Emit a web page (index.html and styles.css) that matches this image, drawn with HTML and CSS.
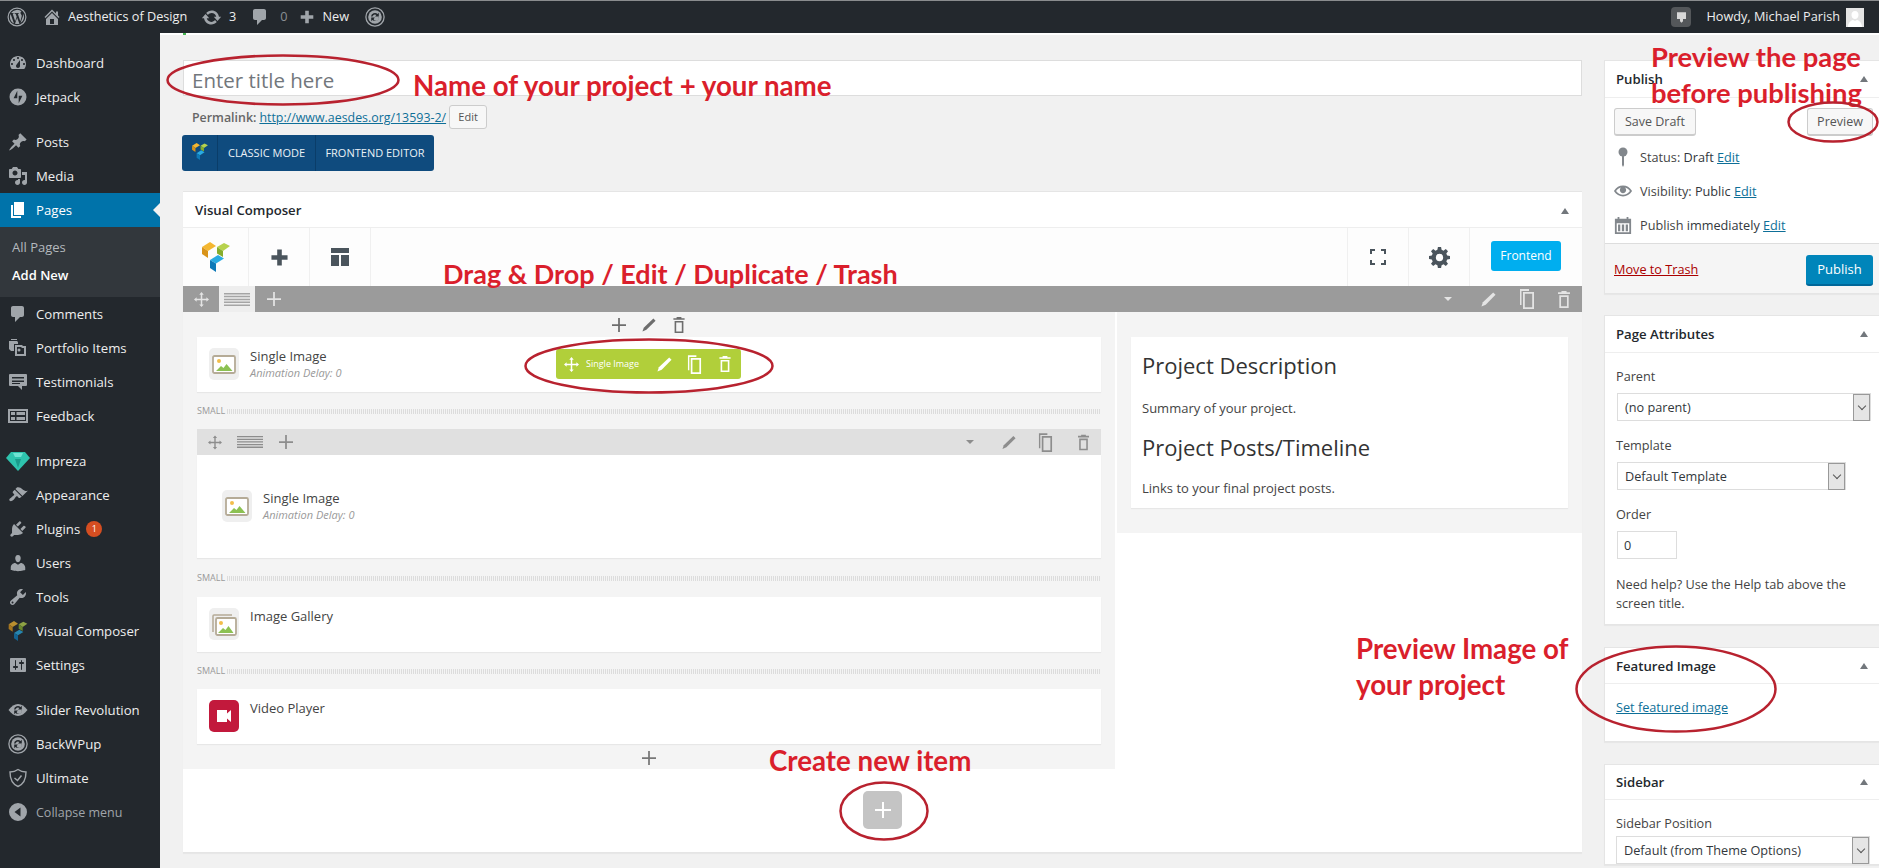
FILE: index.html
```html
<!DOCTYPE html>
<html lang="en">
<head>
<meta charset="utf-8">
<title>Add New Page</title>
<link rel="stylesheet" href="styles.css">
</head>
<body>
<svg class="defs" aria-hidden="true">
  <symbol id="i-wp" viewBox="0 0 20 20"><circle cx="10" cy="10" r="8.9" fill="none" stroke="currentColor" stroke-width="1.2"/><path fill="currentColor" d="M2.9 10c0 2.9 1.7 5.3 4.1 6.5L3.6 7.1C3.2 8 2.9 9 2.9 10zm11.9-.4c0-.9-.3-1.5-.6-2-.4-.6-.7-1.1-.7-1.7 0-.7.5-1.3 1.2-1.3h.1A7.1 7.1 0 0 0 4.100 6.100h.5c.7 0 1.900-.1 1.900-.1.400 0 .4.500 0 .6 0 0-.4 0-.8.100l2.500 7.500 1.500-4.500-1.100-2.900c-.4 0-.7-.1-.7-.1-.4 0-.3-.6 0-.6 0 0 1.100.1 1.800.1s1.900-.1 1.900-.1c.4 0 .4.500 0 .6 0 0-.4 0-.8.100l2.500 7.400.7-2.300c.3-1 .5-1.700.5-2.300zM10.100 10.700l-2.100 6.100a7.100 7.100 0 0 0 4.400-.1l-.05-.1zm6.100-4c0 .2 0 .5 0 .7 0 .7-.1 1.500-.5 2.500l-2.200 6.200a7.100 7.100 0 0 0 2.700-9.400z"/></symbol>
  <symbol id="i-home" viewBox="0 0 20 20"><path fill="currentColor" d="M16 8.500l1.530 1.530-1.060 1.060L10 4.620l-6.470 6.470-1.060-1.060L10 2.500l4 4v-2h2v4zm-6-2.460l6 5.990V18H4v-5.970zM12 17v-5H8v5h4z"/></symbol>
  <symbol id="i-update" viewBox="0 0 20 20"><path fill="currentColor" d="M10.200 3.280c3.530 0 6.430 2.610 6.920 6h2.080l-3.500 4-3.500-4h2.320c-.45-1.970-2.210-3.450-4.320-3.450-1.450 0-2.730.71-3.540 1.780L4.950 5.660C6.230 4.200 8.110 3.280 10.200 3.280zm-.4 13.440c-3.520 0-6.430-2.610-6.920-6H.8l3.500-4c1.170 1.330 2.330 2.670 3.500 4H5.480c.45 1.970 2.210 3.450 4.320 3.450 1.450 0 2.730-.71 3.540-1.780l1.710 1.950c-1.280 1.460-3.150 2.380-5.250 2.380z"/></symbol>
  <symbol id="i-comment" viewBox="0 0 20 20"><path fill="currentColor" d="M5 2h9c1.100 0 2 .9 2 2v7c0 1.100-.9 2-2 2h-2l-5 5v-5H5c-1.100 0-2-.9-2-2V4c0-1.100.9-2 2-2z"/></symbol>
  <symbol id="i-plus-bold" viewBox="0 0 20 20"><path fill="currentColor" d="M17 8v4h-5v5H8v-5H3V8h5V3h4v5z"/></symbol>
  <symbol id="i-backwpup" viewBox="0 0 20 20"><circle cx="10" cy="10" r="9.100" fill="none" stroke="currentColor" stroke-width="1.300"/><circle cx="10" cy="10" r="6.800" fill="currentColor"/><path fill="#23282d" d="M6 9.500a4 4 0 0 1 6.600-2.600l1.200-1.200v3.700h-3.700l1.300-1.300A2.500 2.500 0 0 0 7.500 9.500zm8 1a4 4 0 0 1-6.600 2.600l-1.200 1.200v-3.700h3.700l-1.300 1.300a2.500 2.500 0 0 0 4.900-1.400z"/></symbol>
  <symbol id="i-dashboard" viewBox="0 0 20 20"><path fill="currentColor" d="M3.760 16h12.480c1.100-1.370 1.760-3.110 1.760-5 0-4.420-3.580-8-8-8s-8 3.580-8 8c0 1.890.66 3.630 1.760 5zM10 4c.55 0 1 .45 1 1s-.45 1-1 1-1-.45-1-1 .45-1 1-1zM6 6c.55 0 1 .45 1 1s-.45 1-1 1-1-.45-1-1 .45-1 1-1zm8 0c.55 0 1 .45 1 1s-.45 1-1 1-1-.45-1-1 .45-1 1-1zm-5.370 5.550L12 7v6c0 1.100-.9 2-2 2s-2-.9-2-2c0-.57.24-1.080.63-1.450zM4 10c.55 0 1 .45 1 1s-.45 1-1 1-1-.45-1-1 .45-1 1-1zm12 0c.55 0 1 .45 1 1s-.45 1-1 1-1-.45-1-1 .45-1 1-1z"/></symbol>
  <symbol id="i-jetpack" viewBox="0 0 20 20"><path fill="currentColor" fill-rule="evenodd" d="M10 1.500a8.500 8.500 0 1 0 0 17 8.500 8.500 0 0 0 0-17zM9.300 3.800v7.500H5.600zm1.400 12.400V8.700h3.700z"/></symbol>
  <symbol id="i-post" viewBox="0 0 20 20"><path fill="currentColor" d="M10.440 3.020l1.820-1.820 6.360 6.350-1.830 1.820c-1.050-.68-2.480-.57-3.410.36l-.75.75c-.92.93-1.040 2.350-.35 3.410l-1.830 1.820-2.410-2.410-2.800 2.790c-.42.42-3.380 2.710-3.800 2.290s1.860-3.390 2.280-3.810l2.790-2.790L4.100 9.360l1.830-1.820c1.050.69 2.480.57 3.400-.36l.75-.75c.93-.92 1.050-2.350.36-3.410z"/></symbol>
  <symbol id="i-media" viewBox="0 0 20 20"><path fill="currentColor" d="M13 11V4c0-.55-.45-1-1-1h-1.670L9 1H5L3.670 3H2c-.55 0-1 .45-1 1v7c0 .55.45 1 1 1h10c.55 0 1-.45 1-1zM7 4.500c1.380 0 2.500 1.120 2.500 2.500S8.380 9.500 7 9.500 4.500 8.380 4.500 7 5.620 4.500 7 4.500zM14 6h5v10.500c0 1.380-1.120 2.500-2.500 2.500S14 17.880 14 16.500s1.120-2.500 2.500-2.500c.17 0 .34.020.5.050V9h-3V6zm-4 8.050V13h2v3.500c0 1.380-1.120 2.500-2.500 2.500S7 17.880 7 16.500 8.120 14 9.500 14c.17 0 .34.020.5.050z"/></symbol>
  <symbol id="i-pages" viewBox="0 0 20 20"><path fill="currentColor" d="M6 15V2h10v13H6zm-1 1h8v2H3V5h2v11z"/></symbol>
  <symbol id="i-portfolio" viewBox="0 0 20 20"><path fill="currentColor" d="M1 3h8l1 1v2H6v7H3L1 11zm6 4h7l1 1h3v10H7zm2 2v7h7v-6h-2l-1-1zm2 1.500a1.500 1.500 0 1 1 0 3 1.500 1.500 0 0 1 0-3zM3 1h6v1H3z"/></symbol>
  <symbol id="i-testimonial" viewBox="0 0 20 20"><path fill="currentColor" fill-rule="evenodd" d="M2 2h16a1 1 0 0 1 1 1v10a1 1 0 0 1-1 1h-4v4l-4-4H2a1 1 0 0 1-1-1V3a1 1 0 0 1 1-1zm2 3v1.500h12V5zm0 3.500V10h12V8.500zM4 11v1h8v-1z"/></symbol>
  <symbol id="i-feedback" viewBox="0 0 20 20"><path fill="currentColor" fill-rule="evenodd" d="M0 3h20v14H0zm2 2v10h16V5zm1 1h4v3H3zm5.500 0H17v3H8.500zM3 11h4v3H3zm5.500 0H17v3H8.500z"/></symbol>
  <symbol id="i-diamond" viewBox="0 0 24 20"><path fill="#2ec4ae" d="M5 1h14l5 6-12 13L0 7z"/><path fill="#6fe3d3" d="M7 2h10l-2 4H9z"/><path fill="#1a9c8c" d="M9 8h6l-3 9z"/></symbol>
  <symbol id="i-brush" viewBox="0 0 20 20"><path fill="currentColor" d="M14.480 11.060L7.410 3.990l1.500-1.500c.5-.56 2.300-.47 3.510.32 1.210.8 1.430 1.280 2.910 2.100 1.180.64 2.450 1.260 4.450.85zm-.71.71L6.700 4.700 4.930 6.470c-.39.39-.39 1.020 0 1.410l1.060 1.060c.39.39.39 1.030 0 1.420-.6.6-1.430 1.110-2.210 1.690-.35.26-.7.53-1.010.84C1.430 13.230.76 14.800 1.700 15.820c.94.95 2.590.34 3.920-1 .31-.31.58-.66.85-1.010.58-.78 1.090-1.610 1.690-2.210.39-.39 1.020-.39 1.410 0l1.060 1.060c.39.39 1.020.39 1.410 0z"/></symbol>
  <symbol id="i-plugin" viewBox="0 0 20 20"><path fill="currentColor" d="M13.110 4.360L9.870 7.600 8 5.730l3.240-3.240c.35-.34 1.050-.2 1.560.32.52.51.66 1.210.31 1.550zm-8 1.770l.91-1.120 9.010 9.010-1.190.84c-.71.71-2.630 1.160-3.820 1.160H6.140L4.900 17.260c-.59.59-1.540.59-2.120 0-.59-.58-.59-1.530 0-2.120l1.240-1.240v-3.880c0-1.130.4-3.190 1.090-3.890zm7.260 3.970l3.240-3.240c.34-.35 1.040-.21 1.550.31.52.51.66 1.210.31 1.550l-3.240 3.250z"/></symbol>
  <symbol id="i-users" viewBox="0 0 20 20"><path fill="currentColor" d="M10 9.250c-2.270 0-2.730-3.440-2.730-3.440C7 4.020 7.820 2 9.970 2c2.160 0 2.980 2.020 2.710 3.810 0 0-.41 3.440-2.680 3.440zm0 2.570L12.720 10c2.390 0 4.520 2.330 4.520 4.530v2.490s-3.650 1.130-7.240 1.130c-3.650 0-7.240-1.130-7.240-1.130v-2.490c0-2.250 1.940-4.480 4.470-4.480z"/></symbol>
  <symbol id="i-tools" viewBox="0 0 20 20"><path fill="currentColor" d="M16.680 9.770c-1.340 1.340-3.300 1.670-4.950.99l-5.410 6.520c-.99.99-2.590.99-3.580 0s-.99-2.590 0-3.570l6.520-5.420c-.68-1.650-.35-3.610.99-4.950 1.280-1.280 3.120-1.620 4.720-1.060l-2.890 2.890 2.820 2.820 2.860-2.870c.53 1.580.18 3.390-1.080 4.650zM3.810 16.210c.4.39 1.040.39 1.430 0 .4-.4.4-1.040 0-1.430-.39-.4-1.030-.4-1.430 0-.39.39-.39 1.030 0 1.430z"/></symbol>
  <symbol id="i-vc" viewBox="0 0 28 30"><path fill="#f4b731" d="M0 5l8-5 6 4-8 5z"/><path fill="#d9941a" d="M0 5l6 4v7l-6-4z"/><path fill="#b7d24d" d="M15 5l7-4 6 3-7 5z"/><path fill="#86ad2c" d="M15 5l6 4v6l-6-3.500z"/><path fill="#29abe2" d="M8 18l8-5 6 3.500-8 5z"/><path fill="#0e7ab8" d="M8 18l6 3.500V30l-6-4z"/></symbol>
  <symbol id="i-settings" viewBox="0 0 20 20"><path fill="currentColor" d="M18 16V4c0-.55-.45-1-1-1H3c-.55 0-1 .45-1 1v12c0 .55.45 1 1 1h14c.55 0 1-.45 1-1zM8 11h1c.55 0 1 .45 1 1s-.45 1-1 1H8v1.500c0 .28-.22.5-.5.5s-.5-.22-.5-.5V13H6c-.55 0-1-.45-1-1s.45-1 1-1h1V5.500c0-.28.22-.5.5-.5s.5.22.5.5V11zm5-2h-1c-.55 0-1-.45-1-1s.45-1 1-1h1V5.500c0-.28.22-.5.5-.5s.5.22.5.5V7h1c.55 0 1 .45 1 1s-.45 1-1 1h-1v5.500c0 .28-.22.5-.5.5s-.5-.22-.5-.5V9z"/></symbol>
  <symbol id="i-slider" viewBox="0 0 20 20"><path fill="currentColor" d="M10 4c3.400 0 6.500 2.300 9.500 6-3 3.700-6.100 6-9.500 6S3.500 13.700.5 10C3.500 6.300 6.600 4 10 4z"/><path fill="#23282d" d="M6 9.500a4 4 0 0 1 6.600-2.600l1.200-1.200v3.700h-3.700l1.300-1.300A2.500 2.500 0 0 0 7.500 9.500zm8 1a4 4 0 0 1-6.600 2.600l-1.200 1.200v-3.700h3.700l-1.300 1.300a2.500 2.500 0 0 0 4.900-1.400z"/></symbol>
  <symbol id="i-shield" viewBox="0 0 20 20"><path fill="none" stroke="currentColor" stroke-width="1.400" d="M2 4c3 0 6-1 8-2.500C12 3 15 4 18 4c0 7-2 12-8 14.500C4 16 2 11 2 4z"/><path fill="none" stroke="currentColor" stroke-width="1.500" d="M6.500 10l3 2.500 4-5"/></symbol>
  <symbol id="i-collapse" viewBox="0 0 20 20"><path fill="currentColor" fill-rule="evenodd" d="M10 1a9 9 0 1 1 0 18 9 9 0 0 1 0-18zm2.500 4.500L6.500 10l6 4.500z"/></symbol>
  <symbol id="i-monitor" viewBox="0 0 20 20"><path fill="currentColor" d="M4 3h12v9h-4v3l-2 2-2-2v-3H4z"/></symbol>
  <symbol id="i-avatar" viewBox="0 0 18 19"><rect width="18" height="19" fill="#e4e4e4"/><path fill="#fff" d="M9 3c2.300 0 3.700 1.800 3.500 4.200C12.300 9.500 11 11 9 11S5.700 9.500 5.500 7.200C5.300 4.800 6.700 3 9 3zM2 19c0-4 2.500-6.500 5-7l2 1 2-1c2.500.5 5 3 5 7z"/></symbol>
  <symbol id="i-layout" viewBox="0 0 20 20"><path fill="currentColor" d="M1 1h18v5H1zm0 7h8v11H1zm10 0h8v11h-8z"/></symbol>
  <symbol id="i-full" viewBox="0 0 16 16"><path fill="currentColor" d="M0 0h5v2H2v3H0zm11 0h5v5h-2V2h-3zM0 11h2v3h3v2H0zm14 0h2v5h-5v-2h3z"/></symbol>
  <symbol id="i-gear" viewBox="0 0 20 20"><path fill="currentColor" fill-rule="evenodd" d="M8.500 0h3l.5 2.700 1.800.8L16 1.900 18.100 4l-1.600 2.200.8 1.800 2.700.5v3l-2.700.5-.8 1.800 1.600 2.200L16 18.100l-2.200-1.600-1.800.8-.5 2.700h-3L8 17.300l-1.800-.8L4 18.100 1.900 16l1.600-2.200-.8-1.800L0 11.500v-3L2.700 8l.8-1.800L1.900 4 4 1.900l2.200 1.600L8 2.700zM10 6.500a3.500 3.500 0 1 0 0 7 3.500 3.500 0 0 0 0-7z"/></symbol>
  <symbol id="i-move" viewBox="0 0 20 20"><path fill="currentColor" d="M10 0l3 3.500h-2V9h5.500V7l3.500 3-3.500 3v-2H11v5.500h2L10 20l-3-3.500h2V11H3.500v2L0 10l3.500-3v2H9V3.500H7z"/></symbol>
  <symbol id="i-lines" viewBox="0 0 26 16" preserveAspectRatio="none"><path fill="currentColor" d="M0 0h26v1.800H0zm0 3.500h26v1.800H0zM0 7h26v1.800H0zm0 3.500h26v1.800H0zM0 14h26v2H0z"/></symbol>
  <symbol id="i-plus" viewBox="0 0 16 16"><path fill="currentColor" d="M7 0h2v7h7v2H9v7H7V9H0V7h7z"/></symbol>
  <symbol id="i-pencil" viewBox="0 0 16 16"><path fill="currentColor" d="M13 .5 15.500 3 5 13.500.5 15.500 2 11z"/></symbol>
  <symbol id="i-copy" viewBox="0 0 16 20"><path fill="currentColor" d="M1 0h9v2H2.500v14H1zM4 3h11v17H4zm1.800 1.800v13.400h7.400V4.800z"/></symbol>
  <symbol id="i-trash" viewBox="0 0 14 20"><path fill="currentColor" d="M4 0h6v1.500h4v2H0v-2h4zM1.500 5h11v15h-11zm2 2v11h7V7z"/></symbol>
  <symbol id="i-image" viewBox="0 0 30 32"><rect x="0" y="0" width="30" height="32" rx="5" fill="#efefef"/><rect x="4" y="8" width="22" height="17" rx="1.500" fill="#fff" stroke="#b5ab97" stroke-width="1.800"/><circle cx="10" cy="13" r="2" fill="#f2bd4b"/><path fill="#8cc152" d="M7 23l5-5 2.500 2 3-4 6 7z"/></symbol>
  <symbol id="i-gallery" viewBox="0 0 30 32"><rect x="0" y="0" width="30" height="32" rx="5" fill="#efefef"/><path fill="none" stroke="#b5ab97" stroke-width="1.500" d="M4 24V8a1 1 0 0 1 1-1h18"/><rect x="7" y="10" width="20" height="17" rx="1.500" fill="#fff" stroke="#b5ab97" stroke-width="1.800"/><circle cx="12" cy="15" r="2" fill="#f2bd4b"/><path fill="#8cc152" d="M9 25l5-5 2.500 2 3-4 5 7z"/></symbol>
  <symbol id="i-video" viewBox="0 0 30 32"><rect width="30" height="32" rx="5" fill="#c2193c"/><path fill="#fff" d="M8 10h10v3.500l4-3.500v12l-4-3.500V22H8z"/></symbol>
  <symbol id="i-pin" viewBox="0 0 12 20"><circle cx="6" cy="5" r="4.500" fill="currentColor"/><path fill="currentColor" d="M5 8h2v10l-1 2-1-2z"/></symbol>
  <symbol id="i-eye" viewBox="0 0 20 20"><path fill="currentColor" d="M19.700 9.400C17.700 6 14 3.900 10 3.900S2.300 6 .3 9.400L0 10l.3.6c2 3.400 5.700 5.500 9.700 5.500s7.700-2.100 9.700-5.500l.3-.6-.3-.6zM10 14.100c-3.100 0-6-1.600-7.700-4.100C3.600 8 5.700 6.600 8 6.100c-.9.6-1.500 1.700-1.500 2.900 0 1.900 1.600 3.500 3.500 3.500s3.500-1.600 3.500-3.500c0-1.200-.6-2.300-1.500-2.900 2.300.5 4.400 1.900 5.700 3.900-1.700 2.500-4.600 4.100-7.700 4.100z"/></symbol>
  <symbol id="i-calendar" viewBox="0 0 20 20"><path fill="currentColor" fill-rule="evenodd" d="M1 3h3V1h2v2h8V1h2v2h3v17H1zm2 5v10h14V8zm1.500 1.500h2.500V17H4.500zm4.200 0h2.600V17H8.700zm4.300 0h2.500V17H13z"/></symbol>
</svg>

<header class="topbar">
  <svg class="tb-wp"><use href="#i-wp"/></svg>
  <svg class="tb-home"><use href="#i-home"/></svg>
  <span class="tb-site">Aesthetics of Design</span>
  <svg class="tb-update"><use href="#i-update"/></svg>
  <span class="tb-count">3</span>
  <svg class="tb-comment"><use href="#i-comment"/></svg>
  <span class="tb-zero">0</span>
  <svg class="tb-plus"><use href="#i-plus-bold"/></svg>
  <span class="tb-new">New</span>
  <svg class="tb-backwpup"><use href="#i-backwpup"/></svg>
  <span class="tb-monitor"><svg><use href="#i-monitor"/></svg></span>
  <span class="tb-howdy">Howdy, Michael Parish</span>
  <svg class="tb-avatar"><use href="#i-avatar"/></svg>
</header>

<div class="layout">
  <nav class="sidebar">
    <a class="menu-item"><svg class="mi"><use href="#i-dashboard"/></svg>Dashboard</a>
    <a class="menu-item"><svg class="mi"><use href="#i-jetpack"/></svg>Jetpack</a>
    <div class="menu-sep"></div>
    <a class="menu-item"><svg class="mi"><use href="#i-post"/></svg>Posts</a>
    <a class="menu-item"><svg class="mi"><use href="#i-media"/></svg>Media</a>
    <a class="menu-item active"><svg class="mi"><use href="#i-pages"/></svg>Pages</a>
    <div class="submenu">
      <a class="sub-item">All Pages</a>
      <a class="sub-item current">Add New</a>
    </div>
    <a class="menu-item"><svg class="mi"><use href="#i-comment"/></svg>Comments</a>
    <a class="menu-item"><svg class="mi"><use href="#i-portfolio"/></svg>Portfolio Items</a>
    <a class="menu-item"><svg class="mi"><use href="#i-testimonial"/></svg>Testimonials</a>
    <a class="menu-item"><svg class="mi"><use href="#i-feedback"/></svg>Feedback</a>
    <div class="menu-sep"></div>
    <a class="menu-item"><svg class="mi mi-wide"><use href="#i-diamond"/></svg>Impreza</a>
    <a class="menu-item"><svg class="mi"><use href="#i-brush"/></svg>Appearance</a>
    <a class="menu-item"><svg class="mi"><use href="#i-plugin"/></svg>Plugins<span class="badge">1</span></a>
    <a class="menu-item"><svg class="mi"><use href="#i-users"/></svg>Users</a>
    <a class="menu-item"><svg class="mi"><use href="#i-tools"/></svg>Tools</a>
    <a class="menu-item"><svg class="mi mi-dim"><use href="#i-vc"/></svg>Visual Composer</a>
    <a class="menu-item"><svg class="mi"><use href="#i-settings"/></svg>Settings</a>
    <div class="menu-sep"></div>
    <a class="menu-item"><svg class="mi"><use href="#i-slider"/></svg>Slider Revolution</a>
    <a class="menu-item"><svg class="mi"><use href="#i-backwpup"/></svg>BackWPup</a>
    <a class="menu-item"><svg class="mi"><use href="#i-shield"/></svg>Ultimate</a>
    <a class="menu-item collapse"><svg class="mi"><use href="#i-collapse"/></svg>Collapse menu</a>
  </nav>

  <main class="content">
    <div class="primary">
      <div class="title-box">Enter title here</div>
      <div class="permalink"><span>Permalink:</span><a class="link">http://www.aesdes.org/13593-2/</a><span class="btn-edit">Edit</span></div>
      <div class="vc-switch">
        <span class="vc-cell vc-logo"><svg><use href="#i-vc"/></svg></span>
        <span class="vc-cell vc-mode">CLASSIC MODE</span>
        <span class="vc-cell">FRONTEND EDITOR</span>
      </div>

      <section class="vc-box">
        <div class="vc-head head-low"><span>Visual Composer</span><i class="caret"></i></div>
        <div class="vc-tools">
          <span class="tool tool-logo"><svg class="t-logo"><use href="#i-vc"/></svg></span>
          <span class="tool"><svg class="t-plus"><use href="#i-plus-bold"/></svg></span>
          <span class="tool"><svg class="t-layout"><use href="#i-layout"/></svg></span>
          <span class="tool-fill"></span>
          <span class="tool tool-left"><svg class="t-full"><use href="#i-full"/></svg></span>
          <span class="tool tool-left"><svg class="t-gear"><use href="#i-gear"/></svg></span>
          <span class="tool-btn"><span class="btn-frontend">Frontend</span></span>
        </div>
        <div class="row-bar">
          <span class="rb-cell"><svg class="rb-move"><use href="#i-move"/></svg></span>
          <span class="rb-cell rb-on"><svg class="rb-lines"><use href="#i-lines"/></svg></span>
          <span class="rb-cell"><svg class="rb-plus"><use href="#i-plus"/></svg></span>
          <span class="tool-fill"></span>
          <i class="rb-caret"></i>
          <svg class="rb-pencil"><use href="#i-pencil"/></svg>
          <svg class="rb-copy"><use href="#i-copy"/></svg>
          <svg class="rb-trash"><use href="#i-trash"/></svg>
        </div>
        <div class="columns">
          <div class="col-left">
            <div class="col-ctl">
              <svg class="ctl-plus"><use href="#i-plus"/></svg>
              <svg class="ctl-pencil"><use href="#i-pencil"/></svg>
              <svg class="ctl-trash"><use href="#i-trash"/></svg>
            </div>
            <div class="item">
              <svg class="item-ico"><use href="#i-image"/></svg>
              <div><div class="item-name">Single Image</div><div class="item-sub">Animation Delay: 0</div></div>
              <div class="green-tool">
                <svg class="gt-move"><use href="#i-move"/></svg>
                <span class="gt-label">Single Image</span>
                <svg class="gt-pencil"><use href="#i-pencil"/></svg>
                <svg class="gt-copy"><use href="#i-copy"/></svg>
                <svg class="gt-trash"><use href="#i-trash"/></svg>
              </div>
            </div>
            <div class="small-row"><span>SMALL</span><i></i></div>
            <div class="inner-bar">
              <svg class="ib-move"><use href="#i-move"/></svg>
              <svg class="ib-lines"><use href="#i-lines"/></svg>
              <svg class="ib-plus"><use href="#i-plus"/></svg>
              <span class="tool-fill"></span>
              <i class="ib-caret"></i>
              <svg class="ib-pencil"><use href="#i-pencil"/></svg>
              <svg class="ib-copy"><use href="#i-copy"/></svg>
              <svg class="ib-trash"><use href="#i-trash"/></svg>
            </div>
            <div class="inner-body">
              <svg class="item-ico"><use href="#i-image"/></svg>
              <div><div class="item-name">Single Image</div><div class="item-sub">Animation Delay: 0</div></div>
            </div>
            <div class="small-row small-row-b"><span>SMALL</span><i></i></div>
            <div class="item">
              <svg class="item-ico"><use href="#i-gallery"/></svg>
              <div><div class="item-name">Image Gallery</div></div>
            </div>
            <div class="small-row"><span>SMALL</span><i></i></div>
            <div class="item">
              <svg class="item-ico"><use href="#i-video"/></svg>
              <div><div class="item-name">Video Player</div></div>
            </div>
            <div class="col-foot"><svg class="ctl-plus"><use href="#i-plus"/></svg></div>
          </div>
          <div class="col-right">
            <div class="text-block">
              <h2>Project Description</h2>
              <p>Summary of your project.</p>
              <h2 class="h2-b">Project Posts/Timeline</h2>
              <p>Links to your final project posts.</p>
            </div>
          </div>
        </div>
        <div class="add-area"><span class="add-btn"><svg><use href="#i-plus"/></svg></span></div>
      </section>
    </div>

    <aside class="side">
      <section class="panel">
        <div class="panel-head"><span>Publish</span><i class="caret"></i></div>
        <div class="pub-buttons"><span class="btn">Save Draft</span><span class="btn btn-preview">Preview</span></div>
        <div class="pub-row"><svg class="pr-ico pr-pin"><use href="#i-pin"/></svg><span>Status: <b>Draft</b> <a class="link">Edit</a></span></div>
        <div class="pub-row"><svg class="pr-ico"><use href="#i-eye"/></svg><span>Visibility: <b>Public</b> <a class="link">Edit</a></span></div>
        <div class="pub-row"><svg class="pr-ico"><use href="#i-calendar"/></svg><span>Publish <b>immediately</b> <a class="link">Edit</a></span></div>
        <div class="pub-foot"><a class="trash">Move to Trash</a><span class="btn-publish">Publish</span></div>
      </section>

      <section class="panel">
        <div class="panel-head head-low"><span>Page Attributes</span><i class="caret"></i></div>
        <div class="panel-body attrs">
          <div class="label">Parent</div>
          <div class="select sel-parent"><span>(no parent)</span><i class="sel-arrow"></i></div>
          <div class="label">Template</div>
          <div class="select sel-template"><span>Default Template</span><i class="sel-arrow"></i></div>
          <div class="label">Order</div>
          <div class="order">0</div>
          <p class="help">Need help? Use the Help tab above the screen title.</p>
        </div>
      </section>

      <section class="panel">
        <div class="panel-head head-36"><span>Featured Image</span><i class="caret"></i></div>
        <div class="panel-body feat"><a class="link">Set featured image</a></div>
      </section>

      <section class="panel panel-last">
        <div class="panel-head head-35"><span>Sidebar</span><i class="caret"></i></div>
        <div class="panel-body attrs attrs-tight">
          <div class="label">Sidebar Position</div>
          <div class="select sel-sidebar"><span>Default (from Theme Options)</span><i class="sel-arrow"></i></div>
        </div>
      </section>
    </aside>
  </main>
</div>

<i class="tick"></i>
<div class="note note-name">Name of your project + your name</div>
<div class="note note-drag">Drag &amp; Drop / Edit / Duplicate / Trash</div>
<div class="note note-preview">Preview the page<br>before publishing</div>
<div class="note note-image">Preview Image of<br>your project</div>
<div class="note note-create">Create new item</div>
<svg class="ring ring-title" viewBox="0 0 234 52"><ellipse cx="117" cy="26" rx="115.500" ry="24.500"/></svg>
<svg class="ring ring-preview" viewBox="0 0 92 42"><ellipse cx="46" cy="21" rx="44.500" ry="19.500"/></svg>
<svg class="ring ring-green" viewBox="0 0 250 56"><ellipse cx="125" cy="28" rx="123.500" ry="26.500"/></svg>
<svg class="ring ring-feat" viewBox="0 0 202 88"><ellipse cx="101" cy="44" rx="99.500" ry="42.500"/></svg>
<svg class="ring ring-add" viewBox="0 0 90 60"><ellipse cx="45" cy="30" rx="43.500" ry="28.500"/></svg>
</body>
</html>
```

FILE: styles.css
```css
* { box-sizing: border-box; }
html, body { margin: 0; height: 868px; overflow: hidden; }
body { position: relative; width: 1879px; background: #f1f1f1; font: 13px/1.4 "Open Sans", "Noto Sans", sans-serif; color: #444; }
.defs { position: absolute; width: 0; height: 0; }
i { display: block; font-style: normal; }
svg { display: block; flex: none; }
a { text-decoration: none; }
.link { color: #0e6f98; text-decoration: underline; }
b { font-weight: 400; color: #32373c; }

/* top bar */
.topbar { display: flex; align-items: center; height: 33px; background: #23282d; border-top: 1px solid #8a8c8e; color: #eee; font-size: 12.700px; }
.topbar svg { color: #a0a5aa; }
.tb-wp { width: 20px; height: 20px; margin-left: 7px; }
.tb-home { width: 20px; height: 20px; margin-left: 15px; }
.tb-site { margin-left: 6px; width: 118px; white-space: nowrap; }
.tb-update { width: 21px; height: 21px; margin-left: 15px; }
.tb-count { margin-left: 7px; }
.tb-comment { width: 20px; height: 20px; margin-left: 14px; }
.tb-zero { margin-left: 10px; color: #8a8f94; }
.tb-plus { width: 18px; height: 18px; margin-left: 10px; }
.tb-new { margin-left: 7px; }
.tb-backwpup { width: 20px; height: 20px; margin-left: 16px; }
.tb-monitor { display: flex; align-items: center; justify-content: center; width: 20px; height: 20px; margin-left: auto; background: #54575a; border-radius: 4px; }
.tb-monitor svg { width: 15px; height: 15px; color: #d8d8d8; }
.tb-howdy { margin-left: 15px; }
.tb-avatar { width: 18px; height: 19px; margin: 0 15px 0 6px; }

/* shell */
.layout { display: flex; height: 835px; }
.sidebar { flex: none; width: 160px; padding-top: 13px; background: #23282d; color: #eee; font-size: 13.200px; }
.menu-item { display: flex; align-items: center; position: relative; height: 34px; padding-left: 36px; white-space: nowrap; }
.mi { position: absolute; left: 8px; top: 7px; width: 20px; height: 20px; color: #a0a5aa; }
.mi-wide { left: 6px; width: 24px; }
.mi-dim { opacity: .72; }
.menu-sep { height: 11px; }
.menu-item.active { background: #0073aa; color: #fff; }
.menu-item.active .mi { color: #fff; }
.menu-item.active::after { content: ""; position: absolute; right: 0; top: 10px; border: 7px solid transparent; border-right-color: #f1f1f1; border-left-width: 0; }
.submenu { height: 70px; padding-top: 6px; background: #32373c; font-size: 13px; }
.sub-item { display: flex; align-items: center; height: 28px; padding-left: 12px; color: #b4b9be; }
.sub-item.current { color: #fff; font-weight: 600; }
.badge { display: flex; align-items: center; justify-content: center; width: 16px; height: 16px; margin-left: 6px; border-radius: 50%; background: #d54e21; color: #fff; font-size: 9px; }
.collapse { padding-top: 1px; color: #a0a5aa; font-size: 12.500px; }
.content { display: flex; flex: 1; min-width: 0; padding: 25px 0 0 23px; border-top: 2px solid #fff; }
.tick { position: absolute; left: 183px; top: 33px; width: 3px; height: 2px; background: #46b450; }

/* title */
.primary { flex: none; width: 1399px; }
.title-box { display: flex; align-items: center; height: 36px; padding: 5px 0 0 8px; border: 1px solid #ddd; background: #fff; color: #72777c; font-size: 20.500px; }
.permalink { display: flex; align-items: center; height: 24px; margin-top: 9px; padding: 2px 0 0 9px; color: #666; font-weight: 600; font-size: 12.400px; white-space: pre; }
.permalink .link { margin-left: 3px; font-weight: 400; }
.btn-edit { display: flex; align-items: center; justify-content: center; width: 38px; height: 24px; margin: -2px 0 0 3px; border: 1px solid #ccc; border-radius: 3px; background: #f7f7f7; color: #555; font-size: 11px; font-weight: 400; }
.vc-switch { display: flex; width: 252px; height: 36px; margin: 6px 0 0 -1px; border-radius: 3px; background: #0f4b7e; color: #eaf1f6; font-size: 11px; }
.vc-cell { display: flex; align-items: center; justify-content: center; flex: 1; white-space: nowrap; }
.vc-logo { flex: none; width: 36px; border-right: 1px solid #0a3d69; }
.vc-logo svg { width: 16px; height: 17px; margin-bottom: 4px; }
.vc-mode { flex: none; width: 98px; border-right: 1px solid #0a3d69; }

/* composer */
.vc-box { height: 662px; margin-top: 20px; background: #fff; border: 1px solid #e5e5e5; border-width: 0 0 1px; box-shadow: 0 1px 1px rgba(0,0,0,.04); }
.vc-head { display: flex; align-items: center; justify-content: space-between; height: 37px; padding: 0 13px 0 12px; border-top: 1px solid #e5e5e5; border-bottom: 1px solid #eee; color: #23282d; font-size: 13.200px; font-weight: 600; }
.head-low { padding-top: 2px; }
.caret { width: 0; height: 0; border: 4.500px solid transparent; border-top-width: 0; border-bottom: 6px solid #72777c; }
.vc-tools { display: flex; height: 58px; background: #fdfdfd; }
.tool { display: flex; align-items: center; justify-content: center; width: 61px; border-right: 1px solid #f0f0f0; }
.tool-logo { width: 66px; }
.tool-fill { flex: 1; }
.tool-left { border-left: 1px solid #f0f0f0; border-right: 0; }
.t-logo { width: 28px; height: 30px; }
.t-plus { width: 23px; height: 23px; color: #4a545c; }
.t-layout { width: 20px; height: 20px; color: #4a545c; }
.t-full { width: 16px; height: 16px; color: #4a545c; }
.t-gear { width: 21px; height: 21px; color: #4a545c; }
.tool-btn { display: flex; align-items: center; width: 113px; padding: 0 0 2px 21px; border-left: 1px solid #f0f0f0; }
.btn-frontend { display: flex; align-items: center; justify-content: center; width: 70px; height: 30px; border-radius: 3px; background: #00aeef; color: #fff; font-size: 12px; }
.row-bar { display: flex; align-items: center; height: 26px; background: #9b9b9b; color: #e4e4e4; }
.rb-cell { display: flex; align-items: center; justify-content: center; width: 36px; height: 26px; }
.rb-on { background: #eee; color: #a5a5a5; }
.rb-move { width: 15px; height: 15px; }
.rb-lines { width: 26px; height: 13px; }
.rb-plus { width: 14px; height: 14px; margin-left: 2px; }
.rb-caret { border: 4px solid transparent; border-bottom-width: 0; border-top: 4px solid #e4e4e4; }
.rb-pencil { width: 15px; height: 15px; margin-left: 29px; }
.rb-copy { width: 16px; height: 20px; margin-left: 23px; }
.rb-trash { width: 12px; height: 17px; margin: 0 12px 0 23px; }
.columns { display: flex; justify-content: space-between; height: 457px; }
.col-left { flex: none; width: 932px; padding: 0 14px; background: #f4f4f4; }
.col-ctl { display: flex; align-items: center; justify-content: center; height: 25px; color: #6d6d6d; padding-right: 2px; }
.ctl-plus { width: 14px; height: 14px; }
.ctl-pencil { width: 14px; height: 14px; margin-left: 16px; }
.ctl-trash { width: 12px; height: 16px; margin-left: 17px; }
.item { display: flex; position: relative; height: 55px; padding: 11px 12px; background: #fff; box-shadow: 0 1px 1px rgba(0,0,0,.05); }
.item-ico { width: 30px; height: 32px; margin-right: 11px; }
.item-name { height: 18px; line-height: 17px; color: #444; font-size: 13px; }
.item-sub { height: 14px; line-height: 14px; color: #999; font-size: 11px; font-style: italic; }
.green-tool { display: flex; align-items: center; position: absolute; left: 359px; top: 12px; width: 185px; height: 30px; border-radius: 3px; background: #b1cf3a; color: #fff; }
.gt-move { width: 15px; height: 15px; margin-left: 8px; }
.gt-label { width: 64px; margin-left: 7px; font-size: 9px; white-space: nowrap; }
.gt-pencil { width: 15px; height: 15px; margin-left: 7px; }
.gt-copy { width: 15px; height: 19px; margin-left: 15px; }
.gt-trash { width: 12px; height: 16px; margin-left: 17px; }
.small-row { display: flex; align-items: center; height: 37px; padding-top: 1px; color: #9a9a9a; font-size: 9px; }
.small-row-b { height: 39px; }
.small-row i { flex: 1; height: 5px; margin-left: 2px; background: repeating-linear-gradient(90deg, #dcdcdc 0 1px, #f4f4f4 1px 2px); }
.inner-bar { display: flex; align-items: center; height: 26px; padding-left: 11px; background: #e0e0e0; color: #8d8d8d; }
.ib-move { width: 14px; height: 15px; }
.ib-lines { width: 26px; height: 12px; margin-left: 15px; }
.ib-plus { width: 14px; height: 14px; margin-left: 16px; }
.ib-caret { border: 4px solid transparent; border-bottom-width: 0; border-top: 4px solid #8d8d8d; }
.ib-pencil { width: 14px; height: 15px; margin-left: 28px; }
.ib-copy { width: 15px; height: 19px; margin-left: 22px; }
.ib-trash { width: 11px; height: 17px; margin: 0 12px 0 25px; }
.inner-body { display: flex; height: 103px; padding: 35px 0 0 25px; background: #fff; box-shadow: 0 1px 1px rgba(0,0,0,.05); }
.col-foot { display: flex; align-items: center; justify-content: center; height: 25px; padding-top: 3px; color: #777; }
.col-right { flex: none; width: 465px; height: 221px; padding: 25px 14px; background: #f4f4f4; }
.text-block { height: 171px; padding: 13px 11px 0; background: #fff; box-shadow: 0 1px 1px rgba(0,0,0,.05); }
.text-block h2 { margin: 0; color: #333; font-size: 22px; font-weight: 400; line-height: 30px; }
.text-block .h2-b { margin-top: 14px; }
.text-block p { margin: 18px 0 0; color: #444; font-size: 13px; line-height: 20px; }
.text-block .h2-b + p { margin-top: 16px; }
.add-area { display: flex; justify-content: center; padding-top: 22px; }
.add-btn { display: flex; align-items: center; justify-content: center; width: 39px; height: 38px; border-radius: 5px; background: #c4c4c4; color: #fff; }
.add-btn svg { width: 16px; height: 16px; }

/* right column */
.side { flex: none; width: 275px; margin-left: 22px; font-size: 12.700px; }
.panel { margin-bottom: 22px; background: #fff; border: 1px solid #e5e5e5; border-right: 0; box-shadow: 0 1px 1px rgba(0,0,0,.04); }
.panel:first-child { height: 234px; margin-bottom: 21px; }
.panel-last { margin-bottom: 0; }
.panel-head { display: flex; align-items: center; justify-content: space-between; height: 37px; padding: 0 11px; border-bottom: 1px solid #eee; color: #23282d; font-size: 13.200px; font-weight: 600; }
.panel-head span { padding-top: 1px; }
.head-36 { height: 36px; }
.head-35 { height: 35px; }
.pub-buttons { display: flex; justify-content: space-between; padding: 10px 6px 0 9px; }
.btn { display: flex; align-items: center; justify-content: center; width: 82px; height: 28px; border: 1px solid #ccc; border-bottom-width: 2px; border-radius: 3px; background: #f7f7f7; color: #555; font-size: 12.500px; }
.btn-preview { width: 66px; }
.pub-row { display: flex; align-items: center; height: 34px; padding-left: 9px; }
.pub-row span { padding-top: 2px; }
.pub-buttons + .pub-row { margin-top: 4px; }
.pr-ico { width: 18px; height: 18px; margin-right: 8px; color: #82878c; }
.pr-pin { width: 18px; height: 20px; }
.pub-foot { display: flex; align-items: center; justify-content: space-between; height: 50px; margin-top: 1px; padding: 3px 6px 0 9px; border-top: 1px solid #ddd; background: #f5f5f5; }
.trash { color: #a00; text-decoration: underline; }
.btn-publish { display: flex; align-items: center; justify-content: center; width: 67px; height: 31px; border-radius: 3px; background: #0085ba; border-bottom: 2px solid #006799; color: #fff; font-size: 13px; }
.panel-body { padding: 0 11px; }
.attrs { height: 271px; padding-top: 14px; }
.attrs-tight { height: auto; padding-top: 14px; }
.label { height: 18px; line-height: 18px; color: #444; }
.select { display: flex; align-items: center; justify-content: space-between; height: 28px; margin: 8px 0 15px 1px; padding-left: 7px; border: 1px solid #ddd; background: #fff; color: #32373c; }
.select span { padding-top: 2px; }
.sel-parent { width: 254px; }
.sel-template { width: 229px; }
.sel-sidebar { width: 254px; margin: 4px 0 0; }
.sel-arrow { display: flex; align-items: center; justify-content: center; width: 17px; height: 27px; border: 1px solid #999; background: #e5e5e5; }
.sel-arrow::after { content: ""; width: 5px; height: 5px; margin-top: -3px; border-right: 1px solid #555; border-bottom: 1px solid #555; transform: rotate(45deg); }
.order { display: flex; align-items: center; width: 60px; height: 28px; margin: 8px 0 15px 1px; padding: 2px 0 0 6px; border: 1px solid #ddd; color: #32373c; }
.help { margin: 0; padding-top: 1px; color: #444; line-height: 19px; }
.feat { height: 57px; padding-top: 15px; }

/* annotations */
.note { position: absolute; color: #da1f2c; font-family: Lato, "Open Sans", sans-serif; font-weight: 700; font-size: 27.700px; line-height: 36px; white-space: nowrap; }
.note-name { left: 413px; top: 68px; }
.note-drag { left: 443px; top: 256px; font-size: 27px; }
.note-preview { left: 1651px; top: 39px; font-size: 27.400px; }
.note-image { left: 1356px; top: 631px; }
.note-create { left: 769px; top: 743px; }
.ring { position: absolute; overflow: visible; }
.ring ellipse { fill: none; stroke: #b8222f; stroke-width: 2.500px; }
.ring-title { left: 166px; top: 54px; width: 234px; height: 52px; }
.ring-preview { left: 1787px; top: 101px; width: 92px; height: 42px; }
.ring-green { left: 524px; top: 338px; width: 250px; height: 56px; }
.ring-feat { left: 1575px; top: 645px; width: 202px; height: 88px; }
.ring-add { left: 839px; top: 781px; width: 90px; height: 60px; }
```
